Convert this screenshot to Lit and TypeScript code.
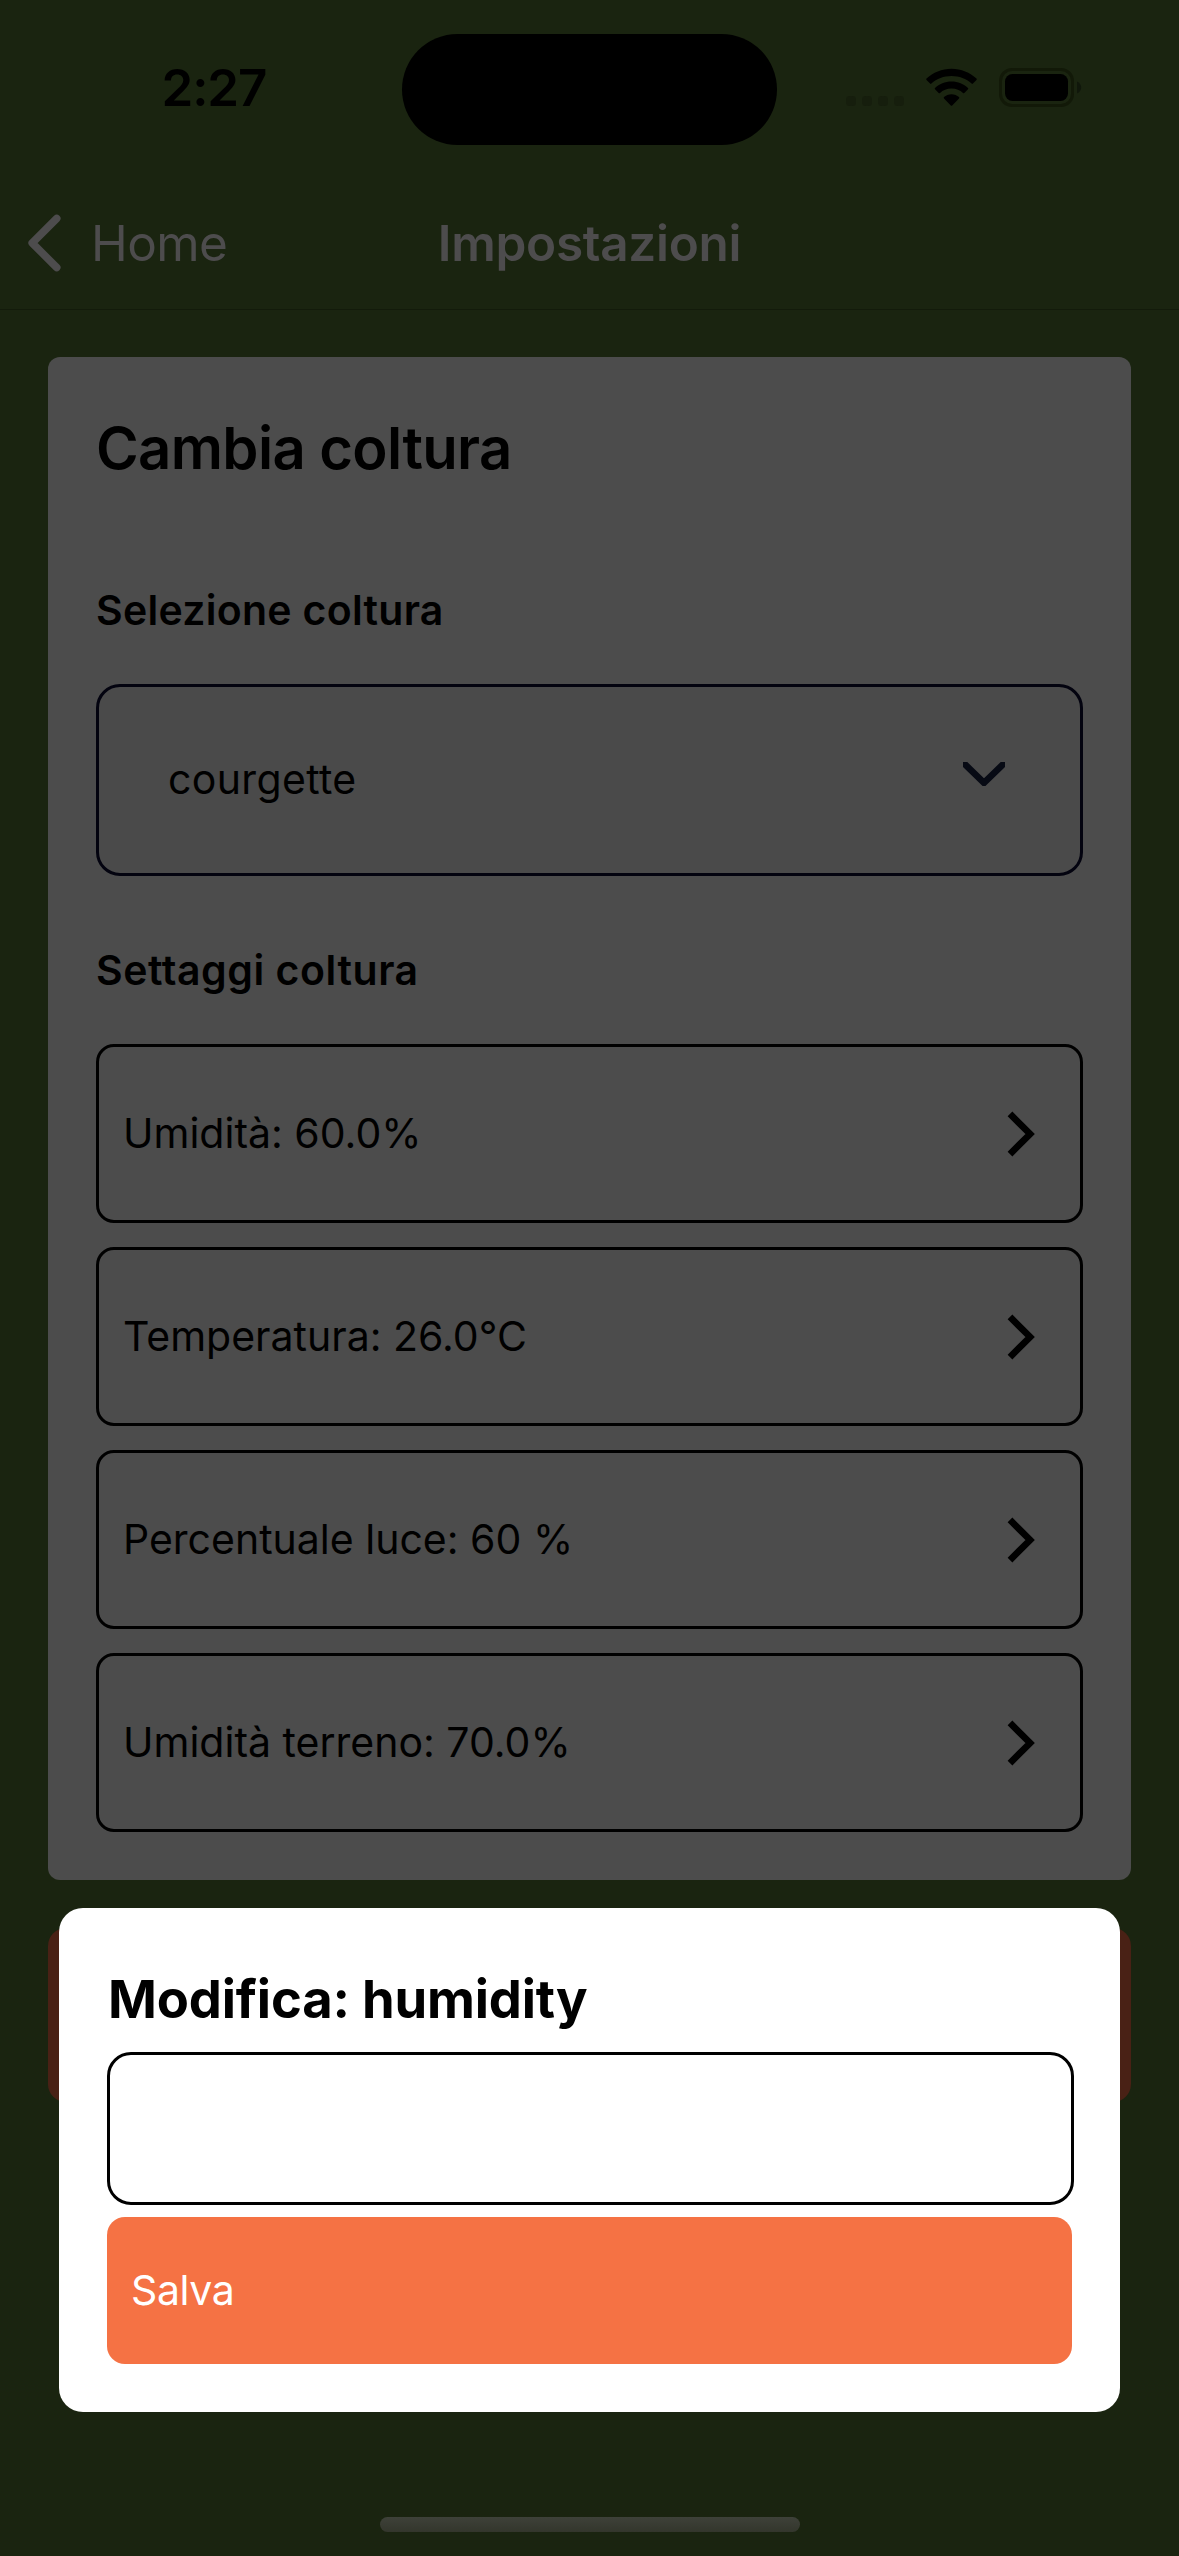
import { LitElement, html, css } from "lit";
import { customElement, property } from "lit/decorators.js";

@customElement("status-bar")
export class StatusBar extends LitElement {
  static styles = css`
    :host {
      display: grid;
      grid-template-columns: 1fr 375px 1fr;
      align-items: center;
      height: 177px;
      box-sizing: border-box;
    }
    .time {
      padding: 0 0 1px 161.5px;
      font-size: 51px;
      font-weight: 600;
      line-height: 60px;
      letter-spacing: -1.1px;
      color: #000;
    }
    .island {
      height: 111px;
      margin-top: 1px;
      border-radius: 56px;
      background: #000;
    }
    .indicators {
      display: flex;
      align-items: center;
      padding: 0 97px 2px 69px;
    }
    .dots {
      display: flex;
      gap: 6px;
      padding-top: 26px;
    }
    .dot {
      width: 10px;
      height: 10px;
      border-radius: 3.5px;
      background: #161e0d;
    }
    .wifi {
      display: block;
      margin-left: 22px;
    }
    .battery {
      display: block;
      margin-left: 22px;
    }
  `;

  render() {
    return html`
      <div class="time">2:27</div>
      <div class="island"></div>
      <div class="indicators">
        <div class="dots">
          <div class="dot"></div>
          <div class="dot"></div>
          <div class="dot"></div>
          <div class="dot"></div>
        </div>
        <svg class="wifi" width="51" height="39" viewBox="0 0 51 39">
          <path d="M25.5 0.7C35.2 0.7 44 4.5 50.5 10.6C50.9 11 50.9 11.5 50.5 11.9L46.9 15.6C46.5 16 46 16 45.6 15.6C40.3 10.7 33.2 8 25.5 8C17.8 8 10.7 10.7 5.4 15.6C5 16 4.5 16 4.1 15.6L0.5 11.9C0.1 11.5 0.1 11 0.5 10.6C7 4.5 15.8 0.7 25.5 0.7Z" />
          <path d="M25.5 13.4C32 13.4 37.7 15.8 42 19.9C42.4 20.3 42.4 20.8 42 21.2L38.3 24.9C37.9 25.3 37.5 25.3 37 24.9C34 22.2 30.1 20.6 25.5 20.6C20.9 20.6 17 22.2 14 24.9C13.5 25.3 13.1 25.3 12.7 24.9L9 21.2C8.6 20.8 8.6 20.3 9 19.9C13.3 15.8 19 13.4 25.5 13.4Z" />
          <path d="M25.5 26.2C28.4 26.2 31 27.3 33 29.1C33.4 29.5 33.4 30 33 30.4L26.2 37.5C25.8 37.9 25.2 37.9 24.8 37.5L18 30.4C17.6 30 17.6 29.5 18 29.1C20 27.3 22.6 26.2 25.5 26.2Z" />
        </svg>
        <svg class="battery" width="83" height="39" viewBox="0 0 83 39">
          <rect x="1.5" y="1.5" width="72" height="36" rx="11.5" fill="none" stroke="#121908" stroke-width="3" />
          <rect x="6" y="6" width="63" height="27" rx="7.5" fill="#000" />
          <path d="M78 13.5C80.6 14.6 82.2 17 82.2 19.5C82.2 22 80.6 24.4 78 25.5Z" fill="#10170b" />
        </svg>
      </div>
    `;
  }
}

@customElement("nav-header")
export class NavHeader extends LitElement {
  static styles = css`
    :host {
      display: grid;
      grid-template-columns: 1fr auto 1fr;
      align-items: center;
      height: 133px;
      box-sizing: border-box;
      border-bottom: 1px solid #131b0b;
      color: #4d4c4d;
      font-size: 49.5px;
      line-height: 60px;
    }
    .back {
      display: flex;
      align-items: center;
      gap: 30px;
      padding-left: 27px;
      letter-spacing: -0.61px;
    }
    .title {
      font-weight: 600;
      letter-spacing: -0.3px;
    }
    svg {
      display: block;
    }
  `;

  render() {
    return html`
      <div class="back">
        <svg width="34" height="58" viewBox="0 0 34 58" fill="none">
          <path d="M29.7 4.5L5.2 29L29.7 53.5" stroke="#4d4c4d" stroke-width="7.6" stroke-linecap="round" stroke-linejoin="round" />
        </svg>
        <span>Home</span>
      </div>
      <div class="title">Impostazioni</div>
      <div></div>
    `;
  }
}

@customElement("setting-row")
export class SettingRow extends LitElement {
  static styles = css`
    :host {
      display: flex;
      align-items: center;
      justify-content: space-between;
      height: 179px;
      box-sizing: border-box;
      border: 3px solid #000;
      border-radius: 18px;
      padding: 0 45px 0 24px;
      font-size: 41px;
      line-height: 50px;
      letter-spacing: 0;
      color: #000;
    }
    span {
      padding-bottom: 2px;
    }
    svg {
      display: block;
    }
  `;

  @property() label = "";

  render() {
    return html`
      <span>${this.label}</span>
      <svg width="28" height="46" viewBox="0 0 28 46" fill="none">
        <path d="M3 2.9L23.1 23L3 43.1" stroke="#000" stroke-width="6.7" />
      </svg>
    `;
  }
}

@customElement("edit-dialog")
export class EditDialog extends LitElement {
  static styles = css`
    :host {
      display: block;
      box-sizing: border-box;
      padding: 48px;
      border-radius: 24px;
      background: #fff;
    }
    .title {
      margin: 0;
      padding-left: 1px;
      font-size: 52.5px;
      font-weight: 700;
      line-height: 87px;
      letter-spacing: -0.18px;
      color: #000;
    }
    .field {
      width: 967px;
      height: 153px;
      box-sizing: border-box;
      margin-top: 9px;
      border: 3px solid #000;
      border-radius: 24px;
      background: #fff;
    }
    .save {
      display: flex;
      align-items: center;
      height: 147px;
      box-sizing: border-box;
      margin-top: 12px;
      padding: 0 24px 2px;
      border-radius: 18px;
      background: #f57244;
      color: #fff;
      font-size: 41px;
      line-height: 50px;
      letter-spacing: -0.4px;
    }
  `;

  @property() field = "";

  render() {
    return html`
      <h2 class="title">Modifica: ${this.field}</h2>
      <div class="field"></div>
      <div class="save">Salva</div>
    `;
  }
}

@customElement("app-root")
export class AppRoot extends LitElement {
  static styles = css`
    :host {
      display: flex;
      flex-direction: column;
      position: relative;
      width: 1179px;
      height: 2556px;
      box-sizing: border-box;
      overflow: hidden;
      background: #1a2410;
      font-family: Inter, "Liberation Sans", sans-serif;
      color: #000;
    }
    .content {
      display: flex;
      flex-direction: column;
      gap: 48px;
      padding: 47px 48px 0;
    }
    .card {
      padding: 48px;
      border-radius: 12px;
      background: #4c4c4c;
    }
    h1 {
      margin: 0;
      padding-top: 1px;
      font-size: 58px;
      font-weight: 600;
      line-height: 85px;
      letter-spacing: -0.63px;
    }
    h3 {
      margin: 0;
      font-size: 41px;
      font-weight: 600;
      line-height: 50px;
    }
    .crop-label {
      margin-top: 94px;
      letter-spacing: 0.28px;
    }
    .settings-label {
      margin-top: 69px;
      letter-spacing: 0.55px;
    }
    .select {
      display: flex;
      align-items: center;
      justify-content: space-between;
      height: 192px;
      box-sizing: border-box;
      margin-top: 49px;
      padding: 0 75px 0 69px;
      border: 3px solid #03030f;
      border-radius: 24px;
      background: #4a4a4a;
      font-size: 41px;
      line-height: 50px;
      letter-spacing: 0.35px;
    }
    .select span {
      padding-bottom: 3px;
    }
    .caret {
      display: block;
      margin-bottom: 12px;
    }
    .rows {
      display: flex;
      flex-direction: column;
      gap: 24px;
      margin-top: 49px;
    }
    .delete {
      height: 174px;
      border-radius: 18px;
      background: #492115;
    }
    .dialog {
      position: absolute;
      left: 59px;
      top: 1908px;
      width: 1061px;
      height: 504px;
    }
    .home-indicator {
      position: absolute;
      left: 380px;
      bottom: 24px;
      width: 420px;
      height: 15px;
      border-radius: 8px;
      background: linear-gradient(#3e4139, #33362c);
    }
  `;

  private settings = [
    "Umidità: 60.0%",
    "Temperatura: 26.0°C",
    "Percentuale luce: 60 %",
    "Umidità terreno: 70.0%",
  ];

  render() {
    return html`
      <status-bar></status-bar>
      <nav-header></nav-header>
      <div class="content">
        <div class="card">
          <h1>Cambia coltura</h1>
          <h3 class="crop-label">Selezione coltura</h3>
          <div class="select">
            <span>courgette</span>
            <svg class="caret" width="42" height="24" viewBox="0 0 42 24" fill="none">
              <path d="M-1 -0.5L21 20.8L43 -0.5" stroke="#070a14" stroke-width="6.6" />
            </svg>
          </div>
          <h3 class="settings-label">Settaggi coltura</h3>
          <div class="rows">
            ${this.settings.map((s) => html`<setting-row .label=${s}></setting-row>`)}
          </div>
        </div>
        <div class="delete"></div>
      </div>
      <edit-dialog class="dialog" field="humidity"></edit-dialog>
      <div class="home-indicator"></div>
    `;
  }
}
